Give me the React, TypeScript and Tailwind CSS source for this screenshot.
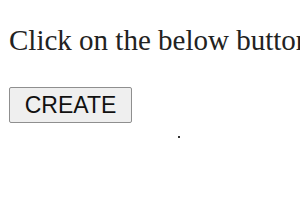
export default function App() {
  return (
    <div className="relative h-[210px] w-[300px] overflow-hidden bg-white px-[9px] pt-[26px]">
      <p className="whitespace-nowrap font-['Liberation_Serif',serif] text-[29px] leading-[28px] text-[#222]">
        Click on the below button to create a new element
      </p>
      <button className="mt-[33px] h-[36px] w-[123px] rounded-[2px] border border-[#8f8f8f] bg-[#efefef] font-['Liberation_Sans',sans-serif] text-[23px] leading-none text-[#111]">
        CREATE
      </button>
      <div className="absolute left-[178px] top-[136px] h-[2px] w-[2px] bg-[#333]" />
    </div>
  );
}
